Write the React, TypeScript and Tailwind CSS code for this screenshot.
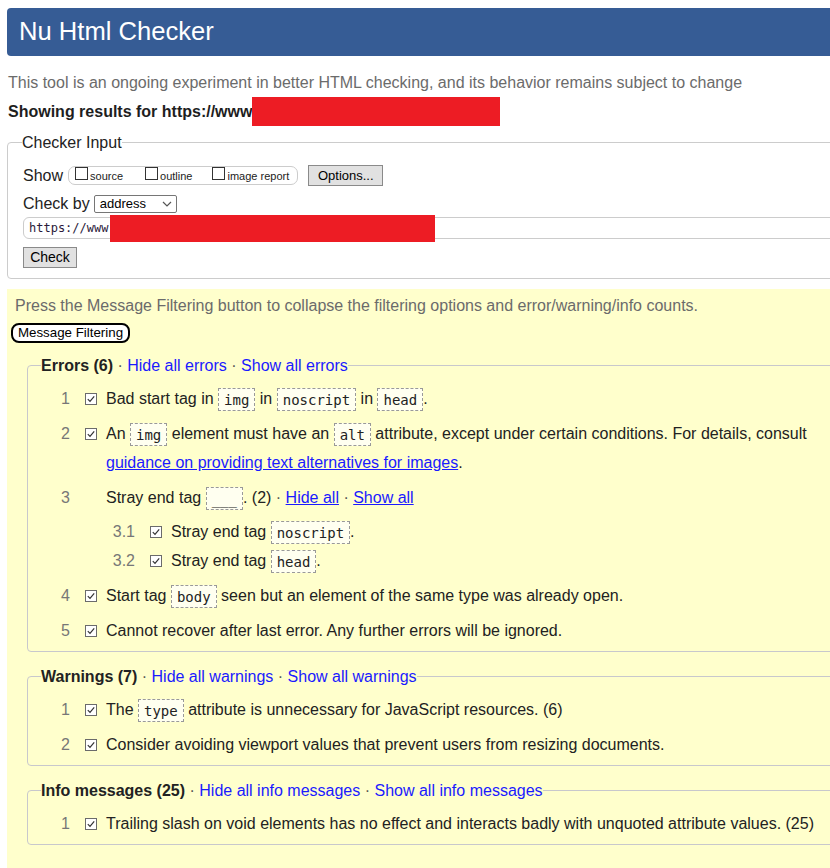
import React from "react";

function Tick() {
  return (
    <svg width="12" height="12" viewBox="0 0 12 12" className="block">
      <rect x="0.5" y="0.5" width="11" height="11" fill="#fff" stroke="#6b6b6b" />
      <path d="M2.8 6.2 L5 8.4 L9.2 3.4" fill="none" stroke="#333" strokeWidth="1.2" />
    </svg>
  );
}

function Code({ children }: { children: React.ReactNode }) {
  return (
    <code className="font-['DejaVu_Sans_Mono',monospace] text-[14px] leading-[16px] text-[#222] border border-dashed border-[#999] bg-[#fffff0] px-[5px] py-[2.5px]">
      {children}
    </code>
  );
}

function Item({ n, children, sub }: { n: string; children: React.ReactNode; sub?: boolean }) {
  return (
    <li className={sub ? "flex" : "flex mb-[6px]"}>
      <span className={(sub ? "w-[29px]" : "w-[42px]") + " shrink-0 text-right text-[#777]"}>{n}</span>
      <span className="ml-[15px] h-[29px] flex items-center shrink-0">
        <Tick />
      </span>
      <div className="ml-[9px] min-w-0">{children}</div>
    </li>
  );
}

function Box({ className }: { className?: string }) {
  return <span className={"block w-[13px] h-[13px] border border-[#333] bg-white shrink-0 " + (className || "")} />;
}

function Legend({ title, what }: { title: string; what: string }) {
  return (
    <legend className="ml-[13px] p-0 leading-[29px] text-[#222]">
      <b>{title}</b>
      <span className="text-[#555]"> · </span>
      <a className="text-[#1a1aff]">Hide all {what}</a>
      <span className="text-[#555]"> · </span>
      <a className="text-[#1a1aff]">Show all {what}</a>
    </legend>
  );
}

export default function App() {
  return (
    <div className="w-[830px] h-[868px] overflow-hidden bg-white font-['Liberation_Sans',Arial,sans-serif] text-[16px] text-[#222]">
      <div className="w-[856px] px-[7px] pt-[8px]">
        <div className="h-[48px] bg-[#365c95] rounded-[4px] flex items-center pl-[12px]">
          <h1 className="text-[25.6px] text-white font-normal leading-none">Nu Html Checker</h1>
        </div>

        <p className="mt-[12px] ml-[1px] leading-[29px] text-[#6b6b6b]">
          This tool is an ongoing experiment in better HTML checking, and its behavior remains subject to change
        </p>
        <p className="ml-[1px] leading-[29px] font-bold text-[#1e1e1e] whitespace-nowrap">
          Showing results for https://www
          <span className="inline-block align-top w-[248px] h-[29px] bg-[#ed1c24]" />
        </p>

        <fieldset className="mt-[2px] border border-[#cccccc] rounded-[4px] pl-[15px] pt-[4px] pb-[10px]">
          <legend className="-ml-px p-0 leading-[29px] text-[#222]">Checker Input</legend>
          <div className="flex items-center h-[29px]">
            <span>Show</span>
            <div className="ml-[5px] h-[19px] border border-[#cccccc] rounded-[7px] flex items-start pl-[6px] pr-[8px] text-[11px] leading-[13px]">
              <Box />
              <span className="ml-[2px] mt-[3px]">source</span>
              <Box className="ml-[22px]" />
              <span className="ml-[2px] mt-[3px]">outline</span>
              <Box className="ml-[20px]" />
              <span className="ml-[2px] mt-[3px]">image report</span>
            </div>
            <button className="ml-[10px] w-[75px] h-[21px] border border-[#8a8a8a] bg-[#e1e1e1] text-[13px] leading-[19px] text-black">
              Options...
            </button>
          </div>
          <div className="flex items-center h-[27px]">
            <span>Check by</span>
            <div className="ml-[4px] mt-[1px] w-[83px] h-[18px] border border-[#767676] rounded-[2px] bg-white flex items-center justify-between pl-[5px] pr-[4px] text-[13px] text-black">
              <span>address</span>
              <svg width="10" height="6" viewBox="0 0 10 6">
                <path d="M1 1 L5 5 L9 1" fill="none" stroke="#555" strokeWidth="1.2" />
              </svg>
            </div>
          </div>
          <div className="h-[22px] border border-[#cccccc] rounded-[6px] bg-white flex items-center pl-[5px]">
            <span className="font-['DejaVu_Sans_Mono',monospace] text-[12px] text-[#2a1a3a]">https://www</span>
            <span className="ml-[2px] w-[325px] h-[27px] bg-[#ed1c24] shrink-0" />
          </div>
          <button className="mt-[8px] w-[54px] h-[21px] border border-[#8a8a8a] bg-[#e1e1e1] text-[14px] leading-[19px] text-black block">
            Check
          </button>
        </fieldset>

        <div className="mt-[10px] bg-[#ffffcc] pl-[4px] pt-[2px] pb-[60px] leading-[29px]">
          <p className="pl-[4px] text-[#6b6b6b]">
            Press the Message Filtering button to collapse the filtering options and error/warning/info counts.
          </p>
          <button className="mt-[3px] block w-[119px] h-[20px] border-2 border-black rounded-[8px] bg-white text-[13.33px] leading-[16px] text-black">
            Message Filtering
          </button>

          <fieldset className="mt-[8px] ml-[16px] mr-[14px] border border-[#c8c8cc] rounded-[4px] pt-[4px]">
            <Legend title="Errors (6)" what="errors" />
            <ol>
              <Item n="1">
                Bad start tag in <Code>img</Code> in <Code>noscript</Code> in <Code>head</Code>.
              </Item>
              <Item n="2">
                An <Code>img</Code> element must have an <Code>alt</Code> attribute, except under certain conditions. For details, consult{" "}
                <a className="text-[#1a1aff] underline">guidance on providing text alternatives for images</a>.
              </Item>
              <li className="flex mb-[6px]">
                <span className="w-[42px] shrink-0 text-right text-[#777]">3</span>
                <div className="ml-[36px]">
                  <div>
                    Stray end tag <Code>___</Code>. (2) <span className="text-[#555]">·</span>{" "}
                    <a className="text-[#1a1aff] underline">Hide all</a> <span className="text-[#555]">·</span>{" "}
                    <a className="text-[#1a1aff] underline">Show all</a>
                  </div>
                  <ol className="mt-[5px]">
                    <Item n="3.1" sub>
                      Stray end tag <Code>noscript</Code>.
                    </Item>
                    <Item n="3.2" sub>
                      Stray end tag <Code>head</Code>.
                    </Item>
                  </ol>
                </div>
              </li>
              <Item n="4">
                Start tag <Code>body</Code> seen but an element of the same type was already open.
              </Item>
              <Item n="5">Cannot recover after last error. Any further errors will be ignored.</Item>
            </ol>
          </fieldset>

          <fieldset className="mt-[10px] ml-[16px] mr-[14px] border border-[#c8c8cc] rounded-[4px] pt-[4px]">
            <Legend title="Warnings (7)" what="warnings" />
            <ol>
              <Item n="1">
                The <Code>type</Code> attribute is unnecessary for JavaScript resources. (6)
              </Item>
              <Item n="2">Consider avoiding viewport values that prevent users from resizing documents.</Item>
            </ol>
          </fieldset>

          <fieldset className="mt-[10px] ml-[16px] mr-[14px] border border-[#c8c8cc] rounded-[4px] pt-[4px]">
            <Legend title="Info messages (25)" what="info messages" />
            <ol>
              <Item n="1">Trailing slash on void elements has no effect and interacts badly with unquoted attribute values. (25)</Item>
            </ol>
          </fieldset>
        </div>
      </div>
    </div>
  );
}
